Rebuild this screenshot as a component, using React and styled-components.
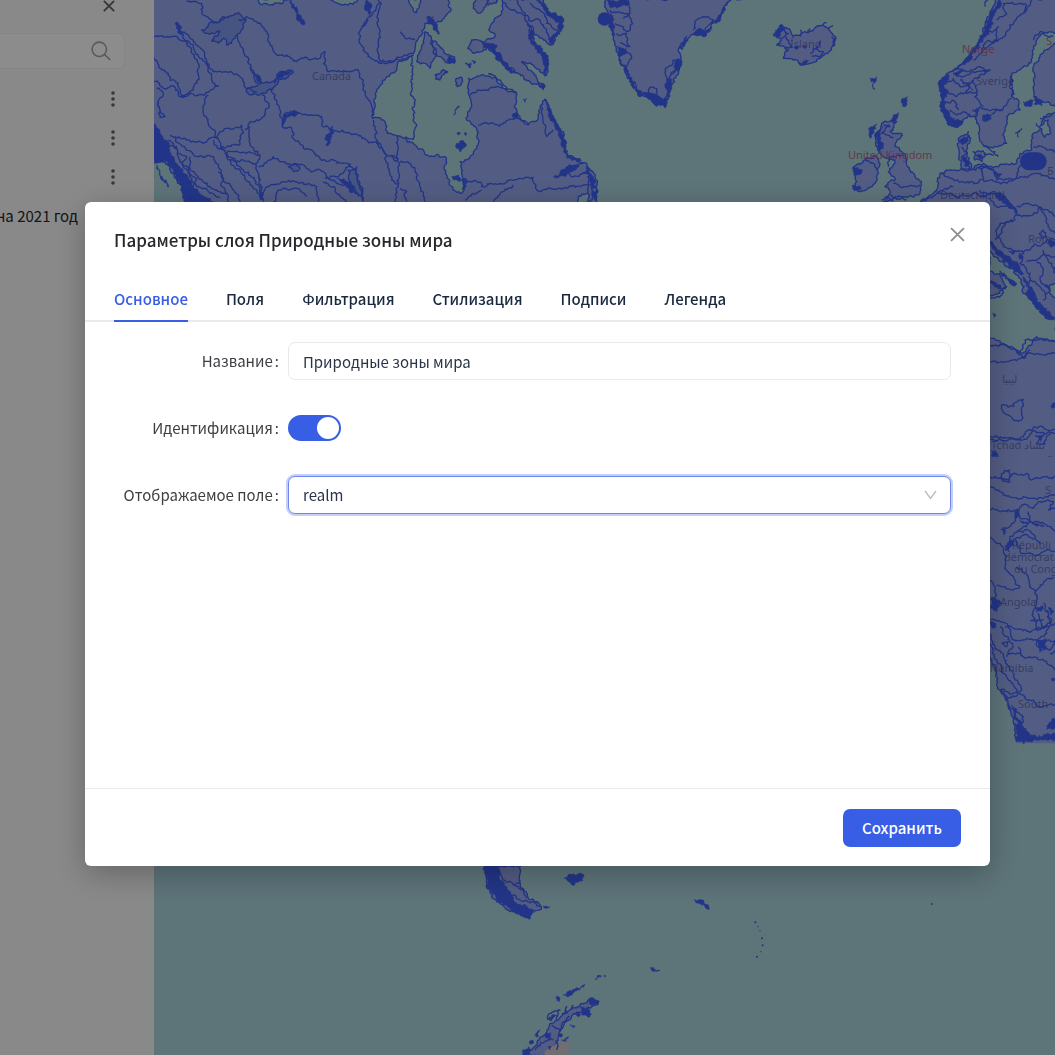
import React from 'react';
import styled, { createGlobalStyle } from 'styled-components';

const GlobalStyle = createGlobalStyle`
  *, *::before, *::after { box-sizing: border-box; }
  body {
    margin: 0;
    font-family: "Noto Sans CJK SC", "Noto Sans", sans-serif;
    font-size: 15px;
    line-height: 24px;
    color: #26282c;
  }
  button, input, select { font: inherit; color: inherit; }
`;

const Shell = styled.div`
  display: grid;
  grid-template-columns: 154px minmax(0, 1fr);
  height: 100vh;
  overflow: hidden;
`;

const Sidebar = styled.aside`
  display: flex;
  flex-direction: column;
  align-items: flex-end;
  padding-right: 29px;
  overflow: hidden;
  background: #f9f9f9;
`;

const IconButton = styled.button`
  display: grid;
  place-items: center;
  width: ${(p) => p.$size}px;
  height: ${(p) => p.$size}px;
  flex: none;
  padding: 0;
  border: 0;
  background: none;
  color: ${(p) => p.$color || '#666'};
`;

const PanelTop = styled.div`
  display: flex;
  align-items: flex-start;
  height: 33px;
  padding-right: 10px;
  flex: none;
`;

const SearchBox = styled.label`
  display: flex;
  align-items: center;
  width: 240px;
  height: 36px;
  flex: none;
  padding-right: 13px;
  border: 1px solid #f0f0f0;
  border-radius: 6px;
  background: #ffffff;
  color: #a2a2a2;
`;

const SearchInput = styled.input`
  flex: 1;
  min-width: 0;
  border: 0;
  outline: 0;
  background: none;
`;

const LayerList = styled.ul`
  display: flex;
  flex-direction: column;
  margin: 0;
  padding: 10px 0 0;
  list-style: none;
`;

const LayerRow = styled.li`
  display: flex;
  align-items: center;
  justify-content: flex-end;
  gap: 23px;
  height: 39px;
  white-space: nowrap;
`;

const MapArea = styled.main`
  min-width: 0;
  overflow: hidden;
  background: #a9d3dd;
`;

const MapSvg = styled.svg`
  display: block;
  width: 100%;
  height: 100%;
  font-family: "Noto Sans", sans-serif;
  font-size: 11px;
`;

const Backdrop = styled.div`
  position: fixed;
  inset: 0;
  display: flex;
  align-items: flex-start;
  padding: 202px 65px 20px 85px;
  background: rgba(0, 0, 0, 0.45);
`;

const Dialog = styled.section`
  flex: 1;
  min-width: 0;
  border-radius: 6px;
  background: #ffffff;
  box-shadow: 0 8px 32px rgba(0, 0, 0, 0.26);
`;

const DialogHeader = styled.header`
  display: flex;
  align-items: flex-start;
  justify-content: space-between;
  padding: 20px 21px 0 29px;
`;

const Title = styled.h1`
  margin: 0;
  padding-top: 4px;
  font-size: 17px;
  line-height: 28px;
  font-weight: 500;
`;

const TabBar = styled.nav`
  display: flex;
  gap: 38px;
  margin-top: 26px;
  padding: 0 29px;
  box-shadow: inset 0 -2px #e9eaec;
`;

const Tab = styled.button`
  height: 42px;
  padding: 0 0 2px;
  border: 0;
  border-bottom: 2px solid ${(p) => (p.$active ? '#375ee4' : 'transparent')};
  background: none;
  color: ${(p) => (p.$active ? '#375ee4' : '#1b2940')};
  font-weight: 500;
`;

const Form = styled.form`
  display: flex;
  flex-direction: column;
  gap: 29px;
  min-height: 466px;
  padding: 20px 39px 20px 29px;
`;

const Field = styled.div`
  display: grid;
  grid-template-columns: 165px minmax(0, 1fr);
  align-items: center;
  column-gap: 9px;
  min-height: 38px;
`;

const FieldLabel = styled.label`
  text-align: right;
  white-space: nowrap;
  color: #3c3e42;
  &::after {
    content: ':';
    margin-left: 2px;
  }
`;

const TextInput = styled.input`
  width: 100%;
  height: 38px;
  padding: 0 14px;
  border: 1px solid #e6e9ee;
  border-radius: 7px;
  outline: 0;
  background: #ffffff;
  color: #2b3446;
`;

const SelectWrap = styled.div`
  display: grid;
  align-items: center;
  & > * { grid-area: 1 / 1; }
`;

const SelectBox = styled.select`
  appearance: none;
  width: 100%;
  height: 38px;
  padding: 0 14px;
  border: 1px solid #6f88ee;
  border-radius: 7px;
  outline: 0;
  background: #ffffff;
  box-shadow: 0 0 0 2px rgba(75, 108, 235, 0.32);
  color: #2b3446;
`;

const SelectArrow = styled.svg`
  justify-self: end;
  margin-right: 14px;
  pointer-events: none;
`;

const Switch = styled.input`
  appearance: none;
  display: flex;
  align-items: center;
  width: 53px;
  height: 26px;
  margin: 0;
  padding: 0 2px;
  border-radius: 13px;
  background: ${(p) => (p.checked ? '#375ee4' : '#b9bcc4')};
  &::before {
    content: '';
    width: 22px;
    height: 22px;
    margin-left: ${(p) => (p.checked ? 'auto' : '0')};
    border-radius: 50%;
    background: #ffffff;
  }
`;

const DialogFooter = styled.footer`
  display: flex;
  justify-content: flex-end;
  padding: 20px 29px 19px;
  border-top: 1px solid #e9eaec;
`;

const PrimaryButton = styled.button`
  width: 118px;
  height: 38px;
  padding: 0;
  border: 0;
  border-radius: 7px;
  background: #375ee4;
  color: #ffffff;
  font-weight: 500;
`;

function CrossIcon({ size, weight }) {
  return (
    <svg width={size} height={size} viewBox="0 0 14 14" fill="none" stroke="currentColor" strokeWidth={weight} aria-hidden="true">
      <path d="M1 1l12 12M13 1L1 13" />
    </svg>
  );
}

function SearchIcon() {
  return (
    <svg width="20" height="20" viewBox="0 0 20 20" fill="none" stroke="currentColor" strokeWidth="1.6" aria-hidden="true">
      <circle cx="8.3" cy="8.3" r="7.2" />
      <path d="M13.5 13.5l5.7 5.3" />
    </svg>
  );
}

function DotsIcon() {
  return (
    <svg width="4" height="16" viewBox="0 0 4 16" fill="currentColor" aria-hidden="true">
      <circle cx="2" cy="2" r="1.8" />
      <circle cx="2" cy="8" r="1.8" />
      <circle cx="2" cy="14" r="1.8" />
    </svg>
  );
}

/* Coastlines: every segment is subdivided and pushed sideways for a natural edge. */
let seed = 7;
function random() {
  seed = (seed * 16807) % 2147483647;
  return seed / 2147483647;
}

function coast(text, closed, rough = 0.3) {
  const nums = text.trim().split(/[\s,]+/).map(Number);
  const pts = [];
  for (let i = 0; i < nums.length; i += 2) pts.push([nums[i], nums[i + 1]]);
  if (closed) pts.push(pts[0]);
  const out = [pts[0]];
  const split = (a, b) => {
    const dx = b[0] - a[0];
    const dy = b[1] - a[1];
    const len = Math.hypot(dx, dy);
    if (len < 7) {
      out.push(b);
      return;
    }
    const k = (random() - 0.5) * 2 * Math.min(rough, 5 / len);
    const m = [(a[0] + b[0]) / 2 - dy * k, (a[1] + b[1]) / 2 + dx * k];
    split(a, m);
    split(m, b);
  };
  for (let i = 1; i < pts.length; i += 1) split(pts[i - 1], pts[i]);
  return 'M' + out.map((p) => p[0].toFixed(1) + ' ' + p[1].toFixed(1)).join('L') + (closed ? 'Z' : '');
}

const LAND = '#97a9ee';
const EDGE = '#3f60f6';
const SEA = '#a9d3dd';

const tiles = [
  {
    x: 150, y: 0,
    base: 'M0 0H780V615H0Z',
    sea: [
      '790,165 745,185 740,210 705,240 685,265 672,305 668,355 700,360 712,400 745,410 790,418',
      '5,485 45,485 70,520 100,560 105,620 5,620',
      '315,-5 330,12 370,15 400,5 420,-5',
      '525,-5 570,12 600,10 630,-5',
    ],
    lakes: [
      '155,90 175,75 225,52 265,37 285,55 275,90 260,105 245,130 230,135 222,115 205,130 185,124 210,95 160,94',
      '290,275 330,250 350,245 380,235 390,215 430,215 400,235 375,260 345,280 300,285',
      '595,510 620,500 632,560 640,600 620,580 600,545',
      '415,500 435,490 450,505 430,515',
    ],
    dark: [
      '5,365 30,400 60,450 75,480 100,510 125,550 150,580 190,605 110,615 95,560 70,520 45,482 5,480',
      '20,495 30,520 55,562 35,540',
      '300,200 318,225 335,250 320,240',
      '390,215 425,213 400,232 372,250',
      '420,0 440,20 452,45 460,75 440,50 430,25',
      '550,380 545,405 530,438 528,405',
      '648,0 665,20 660,50 645,30',
      '395,372 400,350 430,330 445,340 410,352',
      '560,535 600,545 625,590 590,560',
      '75,70 92,78 95,105 85,100',
    ],
    lines: [
      '110,5 155,10 160,45 195,65 235,50',
      '12,110 60,112 105,122 125,150 145,190 145,225 130,270 95,290 85,250 60,240 55,220 30,205 12,170',
      '82,85 100,115 130,135 150,175 175,205 185,240 205,258 165,285 120,280 90,290 75,262 40,265 12,245',
      '92,95 130,120 152,145 172,190 190,215 240,215 275,235 290,265 320,275',
      '20,265 40,280 25,320 45,350 30,352 22,310',
      '175,285 160,330 175,370 195,410 230,470 275,520 320,570 335,600',
      '190,420 240,480 280,510 325,555 340,605',
      '60,405 110,420 160,430 190,412 230,385 275,375 280,400 270,430 215,440',
      '75,410 100,440 140,470 190,470 205,500 215,560 230,585',
      '120,470 120,510 160,545 200,570 235,585 230,610',
      '205,515 240,555 270,605',
      '45,430 80,440 90,480 120,520 140,560 180,580 210,590',
      '30,420 70,430 85,460 110,470 100,500 140,540 130,570 170,600',
      '285,390 300,365 340,350 358,320 345,290 335,285',
      '300,380 300,430 330,465 290,460 245,455 225,460 260,485 315,490',
      '330,465 320,510 335,570 340,600',
      '265,60 290,50 320,65 350,95 360,135 375,160 410,165 440,185 460,175 510,175 525,155 520,190 535,215 575,215 625,210 640,240 640,270 665,320 670,355',
      '262,105 270,130 290,170 305,210 325,250',
      '360,265 380,300 390,350 395,380',
      '395,375 400,345 430,335 480,345 515,350 520,380 550,390 600,400 650,420 685,430 705,460 740,475 785,480',
      '395,380 425,385 430,415 460,445 520,480 590,490 620,510 630,550 640,605',
      '325,500 370,470 400,485 450,495 480,512 520,515 545,540 575,555 610,560',
      '335,600 350,560 380,552 440,545 500,560 505,605',
      '370,605 385,570 430,565 470,590',
      '640,80 660,50 690,10',
      '655,60 625,100 640,150 690,190 730,185 785,165',
      '670,360 680,400 680,430 710,465 725,540 765,560 785,570',
      '725,470 760,490 785,500',
      '520,545 550,560 590,605',
      '525,535 560,530 580,520 600,490',
      '750,95 775,115 785,112',
    ],
  },
  {
    x: 400, y: 0,
    land: [
      '-60,-10 145,-5 150,35 120,65 100,70 75,70 55,115 40,160 0,172 -60,185',
      '75,95 95,120 110,165 90,205 75,190 50,185 65,140',
      '95,120 120,140 165,180 150,190 120,170 100,160',
      '105,225 130,208 143,215 120,240 108,238',
      '170,235 185,232 183,255 172,260',
      '225,-5 220,25 240,40 258,20 260,-5',
      '262,-5 265,15 288,10 290,-5',
      '300,-5 305,40 275,70 270,95 285,110 255,125 215,120 203,145 225,160 265,140 290,160 330,205 380,240 430,265 410,235 365,185 400,195 440,225 445,180 410,140 385,75 400,85 430,120 455,135 470,100 490,65 450,40 425,-5',
      '205,235 240,228 290,235 310,265 350,280 350,340 385,375 415,350 435,300 460,355 490,410 500,460 560,490 580,525 590,570 590,625 -8,625 -8,408 40,430 80,465 135,470 135,510 160,570 180,580 200,545 190,540 180,485 215,465 235,430 230,385 200,360 215,315 205,280',
    ],
    sea: ['30,-5 35,20 50,38 65,-5', '525,610 545,585 575,575 572,610'],
    dark: [
      '170,430 190,422 197,440 183,455 170,445',
      '172,398 180,398 176,404', '192,400 200,400 196,407',
      '80,55 100,50 120,100 100,90',
      '195,190 212,188 208,204', '215,182 228,185 222,192',
      '370,298 380,295 376,308',
      '245,125 290,135 285,150 320,190 345,220 315,200 280,160 250,145',
      '385,70 400,95 400,125 440,165 445,195 435,230 428,180 405,140 385,105',
      '410,0 430,10 450,35 490,55 485,90 458,135 445,118 472,95 478,70 450,48',
      '340,340 355,340 355,355 340,355',
      '460,530 480,520 500,500 555,487 530,505 500,525',
      '432,298 460,350 490,405 500,458 545,482 530,485 490,455 478,410 450,360',
      '560,500 580,525 590,560 590,600 580,570 574,540 555,515',
      '145,170 165,175 160,190 140,182',
      '415,250 435,255 430,270',
      '155,530 175,525 178,545 160,540',
      '160,345 170,325 178,318 168,330',
      '185,540 200,548 188,570',
    ],
    lines: [
      '210,285 250,270 310,265 350,280',
      '235,375 270,370 300,378 350,350 385,375',
      '185,540 240,545 245,560 300,550 360,535 400,532 410,570 480,565 540,560 570,545',
      '280,605 310,575 340,555',
      '0,485 30,490 50,520 60,560 75,605',
      '0,565 20,575 20,605',
      '195,600 220,580 245,570',
      '425,320 430,370 440,410 460,390',
      '265,220 280,225 300,240 320,270',
      '310,5 340,30 370,45 385,75',
      '350,0 360,20 385,60 420,60 440,90 455,130',
      '390,10 420,30 440,70 470,90',
      '0,95 25,115 45,120',
      '500,500 520,530 560,520',
    ],
  },
  {
    x: 590, y: 0,
    land: [
      '50,-5 55,60 75,130 90,185 120,240 150,290 190,295 225,322 240,260 270,190 265,150 300,110 345,90 380,60 410,15 425,-5',
      '575,75 600,90 610,110 650,98 700,75 715,85 735,120 725,150 690,175 640,195 610,180 580,175 595,150 560,135 575,120 550,105',
      '-5,505 15,530 20,570 5,600 -5,605',
    ],
    dark: [
      '50,0 110,0 115,15 60,22', '60,40 72,60 70,110 55,80', '80,140 108,145 110,160 85,168', '150,283 190,280 215,295 235,295 228,322 205,315 180,297',
      '88,175 100,200 125,240 155,285 145,285 115,235', '235,235 248,240 240,290 228,300',
      '262,180 275,180 268,205 240,225 252,200', '310,100 330,85 345,95 365,80 350,105 320,108',
      '268,145 292,108 285,135 275,150', '370,70 395,40 415,5 400,40 380,70',
      '555,100 570,75 590,82 580,92 565,110',
      '625,190 655,182 640,195', '725,110 737,122 730,140', '615,138 628,140 618,148', '640,137 650,138 645,147', '0,520 14,540 8,590',
    ],
    lines: [
      '60,30 110,40 128,70 110,95 75,70', '115,0 120,40 100,55', '80,100 110,100 120,140 90,130', '95,145 125,170 110,210 120,225', '175,290 178,265 200,265 205,300', '225,210 250,180 268,178 255,215 230,240 225,210',
      '310,90 320,60 345,50 370,60 350,90', '660,160 670,145 700,155 690,172 665,168', '630,90 632,110', '655,100 660,85', '680,150 690,125',
      '590,110 605,140 585,145', '570,80 595,100 575,115', '420,0 455,0', '700,75 710,68', '715,90 728,75',
    ],
    circles: [[43, 57, 20]],
  },
  {
    x: 840, y: 0,
    land: [
      '470,-5 440,60 425,110 385,170 330,215 300,250 305,330 325,375 350,382 390,350 410,350 415,400 430,435 470,440 500,430 500,350 540,330 535,300 515,290 515,220 575,185 580,140 610,100 655,100 655,-5',
      '655,125 600,170 580,200 585,300 655,318',
      '655,330 610,350 600,390 580,400 575,450 540,460 530,490 470,500 430,490 400,505 300,520 290,570 245,600 250,625 655,625',
      '355,420 385,395 390,420 380,470 395,500 370,510 358,480',
      '400,455 435,460 425,485 405,480',
      '125,370 170,365 150,395 185,400 165,440 190,460 210,510 245,545 240,580 190,590 130,605 150,580 135,560 165,540 145,515 165,480 125,465 110,440 105,410',
      '75,480 110,470 118,500 105,550 60,575 38,565 50,545 42,500',
    ],
    sea: ['600,385 625,360 632,400 615,412'],
    dark: [
      '90,235 110,230 103,250 92,245', '98,250 105,268 100,265', '188,295 203,290 195,320 188,312', '160,345 175,338 170,365 155,365',
      '525,400 545,385 535,412', '92,380 110,372 100,400 90,415', '105,405 128,380 120,410 130,445 112,452', '550,305 580,300 575,318 552,315',
      '580,290 610,305 605,318 582,312',
      '475,0 485,10 455,65 430,120 405,160 375,195 335,215 380,178 420,115 440,65',
      '300,240 325,222 312,260 322,280 310,300 318,330 345,355 335,380 315,355 300,315',
      '340,220 370,205 355,225', '375,250 400,270 390,255', '345,360 370,362 355,382 340,378',
      '430,345 455,345 445,362 428,362', '398,328 412,325 408,342',
      '358,420 388,405 375,430 362,428', '372,470 390,490 388,505 374,498',
      '42,500 62,508 65,520 45,525', '38,555 58,557 60,570 42,572', '408,465 425,465 418,478', '465,515 485,522 472,532',
      '440,597 480,587 520,605 450,612', '435,10 445,0 435,20',
    ],
    lines: [
      '300,255 340,235 370,260 400,240 405,290 430,320', '310,270 350,290 380,275', '340,220 370,230 410,215 450,210 400,235', '315,310 340,300 355,330', '430,100 460,95 475,80 470,120 440,125 425,150', '470,60 500,40 490,10 560,15 550,40 510,75 490,110 460,130 430,150 400,180',
      '330,330 350,345 370,335 390,350', '350,200 380,215 420,200 440,210', '360,240 385,255 380,280 410,275',
      '550,35 575,0', '490,325 500,310 515,295', '515,225 515,290', '455,340 490,330', '130,375 150,380 125,400 160,415', '190,465 150,470 145,500', '160,550 195,560 240,555', '150,585 185,590 200,600', '125,600 140,590 160,605',
      '300,520 350,540 410,550 430,540 420,500 460,510 470,540 530,530 540,495', '395,510 440,500 465,520', '245,605 290,580 340,560', '430,545 500,550 540,530 600,520 655,540',
      '290,575 350,590 400,580 470,585 520,610', '435,610 470,590', '430,440 465,455 460,465 432,460', '580,440 640,450 655,470', '600,355 640,340', '590,370 600,380', '75,475 100,490 110,510', '465,465 475,470',
      '580,120 600,95 640,110', '405,350 420,320 455,330 490,325', '365,440 380,455 365,470 380,490',
    ],
    rounds: [[540, 457, 80, 54]],
  },
  {
    x: 980, y: 190,
    base: 'M20 0H235V860H20Z',
    sea: [
      '25,180 60,215 100,235 125,270 130,310 165,345 200,385 232,388 232,455 170,440 130,490 110,485 70,460 25,440',
      '195,290 232,275 232,330 210,310',
    ],
    land: ['25,245 60,250 80,290 60,310 25,312'],
    dark: [
      '30,155 60,182 105,215 130,250 118,250 80,215 45,190', '130,260 150,292 180,340 225,390 195,383 165,343 145,320', '60,5 88,38 108,62 80,42 45,20',
      '32,272 45,277 65,297 50,290', '118,190 130,200 128,212 117,205', '35,780 55,800 45,820 30,815', '205,800 215,803 211,812', '218,640 230,640 230,655 218,655',
      '60,242 80,258 110,280 105,288 75,260', '165,738 195,730 183,755 178,748', '205,152 230,152 230,170 208,168', '38,370 46,372 42,382', '85,185 108,182 103,190',
    ],
    lines: [
      '0,20 40,5 70,30 95,45 110,75 170,70 180,50 225,80', '30,25 50,50 80,45 110,70 105,90 60,100 50,130 70,170 110,185 150,180 170,165 225,150',
      '110,50 140,40 180,55 200,100 225,130', '105,90 70,110 45,150', '130,185 120,220 150,250 145,290 170,320', '170,215 190,240 180,270 210,300 190,330', '190,180 215,220 225,250',
      '140,215 170,210 190,190 225,200', '150,270 180,290 195,310', '190,120 178,130 185,145 200,140 190,120', '150,290 165,330 190,350',
      '30,325 65,315 80,290', '30,515 110,512 150,488 225,490', '120,485 135,450 180,445 225,455', '110,480 130,505 150,480', '30,465 80,465 120,490',
      '65,645 100,650 118,630 130,628 125,665 125,690 105,692 75,670 65,645', '30,740 130,740 160,712 225,718', '30,748 140,748 165,722 225,730', '180,735 170,760 195,762 210,730',
      '70,830 90,805 120,825', '45,780 60,820 80,835', '0,0 60,15 80,25',
    ],
  },
  {
    x: 980, y: 460,
    base: 'M20 -10H235V850H108L100 780L80 730L58 690L45 640L30 610H20Z',
    dark: [
      '105,790 130,800 150,830 225,820 228,840 180,838 130,852 108,838', '32,415 58,420 65,432 50,455 32,445', '75,258 95,240 88,275 75,270', '120,180 160,188 195,200 165,193 130,192',
      '165,442 190,438 185,452 168,455', '215,780 230,775 230,800 200,808', '205,442 220,452 213,465', '175,543 195,535 200,562 182,568', '95,735 110,755 125,790 115,790', '105,158 118,152 106,175',
      '32,485 48,492 44,505 34,502', '62,208 78,203 72,225', '215,655 230,655 228,665',
    ],
    lines: [
      '30,50 60,55 85,60 95,45 140,40 155,60 225,50', '30,80 55,90 70,105 140,112 225,105', '65,40 70,65 90,65 88,30 65,40', '30,150 60,155 115,150 125,135 160,145 180,125 220,125 205,150 225,145',
      '115,150 120,175 145,180 145,155', '75,205 95,190 120,165', '85,270 90,230 130,200 150,180 200,195 225,220', '105,240 120,275 160,285 200,270 225,275', '110,215 145,210 180,250', '85,250 130,225 160,240', '30,230 60,250 80,290 80,330 100,350 120,380 100,390 50,375',
      '110,320 135,340 165,400 190,370 220,350', '165,400 170,430 160,470 170,510 210,490 200,450', '190,430 215,480 200,520 170,540 180,575 210,570 225,540', '30,350 45,390 40,430', '30,480 80,490 100,505 160,510 225,490', '75,500 100,540 130,540 225,545', '60,500 100,560 80,590 110,580 150,590 200,605 225,630',
      '65,550 85,545 80,560 65,550', '30,520 45,560 70,590 100,640 125,690 100,700 60,690', '30,550 50,600 80,650 110,700', '60,690 80,720 120,700 150,720 180,740 225,735', '80,735 100,745 130,770 125,820', '30,570 45,630 60,690 85,740 100,780 108,840', '210,580 225,570',
      '150,480 190,480', '175,460 190,500', '115,560 130,590',
    ],
  },
  {
    x: 460, y: 850,
    land: [
      '72,45 80,100 110,155 150,185 210,205 205,185 245,172 205,145 180,100 182,45',
      '185,620 215,600 245,560 275,520 330,480 385,450 415,455 380,475 335,500 300,540 280,600 255,620',
    ],
    ice: ['255,620 265,590 300,580 328,570 328,600 320,620'],
    dark: [
      '70,45 112,45 118,85 145,120 160,150 190,165 222,180 208,208 170,190 120,160 85,115', '312,85 330,72 372,75 368,92 345,104 325,95', '703,148 725,150 745,165 748,178 725,165', '570,352 582,358 600,362 580,364',
      '310,435 335,425 375,403 350,422 325,440', '385,450 402,445 418,455 395,465', '360,470 385,475 390,500 365,495', '265,505 283,493 292,497 275,512', '225,555 240,540 235,560', '188,600 205,590 210,612 185,620', '330,525 345,528 340,533', '305,570 325,560 320,575', '405,388 418,376 425,378 412,384', '250,168 270,170 258,175',
      '208,575 220,572 215,582', '288,445 296,440 298,455', '258,548 272,548 268,572 258,565', '432,375 438,378 434,382', '340,490 360,485 355,500', '265,590 275,590 270,600',
    ],
    lines: [
      '110,50 130,90 160,105 182,100', '160,105 190,120 200,145', '150,130 180,150 240,170', '265,510 270,490 300,480 290,510', '275,525 300,545 330,500', '240,575 280,570', '225,600 240,580', '305,490 320,470 322,490', '290,600 288,570', '335,480 340,465',
    ],
    circles: [[302, 556, 6], [886, 217, 3], [894, 230, 2], [900, 242, 2], [906, 265, 3], [908, 286, 3], [903, 305, 2], [891, 320, 3], [1415, 162, 3]],
  },
];

const geometry = tiles.map((t) => ({
  ...t,
  land: (t.land || []).map((d) => coast(d, true)),
  sea: (t.sea || []).map((d) => coast(d, true)),
  lakes: (t.lakes || []).map((d) => coast(d, true)),
  ice: (t.ice || []).map((d) => coast(d, true)),
  dark: (t.dark || []).map((d) => coast(d, true, 0.4)),
  lines: t.lines.map((d) => coast(d, false)),
}));

const places = [
  [312, 80, 'Canada'],
  [848, 159, 'United Kingdom', true],
  [962, 53, 'Norge', true],
  [976, 85, 'Sverige'],
  [1046, 45, 'S', true],
  [940, 199, 'Deutschland'],
  [1047, 175, 'Б'],
  [1028, 243, 'Rom'],
  [1002, 383, 'ليبيا'],
  [991, 449, 'Tchad تشاد'],
  [1045, 494, 'S'],
  [1012, 549, 'Républi'],
  [1004, 561, 'démocrat'],
  [1014, 573, 'du Cong'],
  [1000, 606, 'Angola'],
  [990, 672, 'Namibia'],
  [1018, 708, 'South'],
  [790, 48, 'Ísland'],
];

function WorldMap() {
  return (
    <MapSvg viewBox="154 0 901 1055" preserveAspectRatio="xMinYMin slice" role="img" aria-label="Карта природных зон мира">
      {geometry.map((t) => (
        <g key={t.x + '-' + t.y} transform={`translate(${t.x} ${t.y}) scale(0.33333)`} strokeLinejoin="round" strokeWidth="4" stroke={EDGE}>
          {t.base && <path d={t.base} fill={LAND} stroke="none" />}
          {t.land.length > 0 && t.base === undefined && <path d={t.land.join('')} fill={LAND} />}
          <path d={t.sea.join('')} fill={SEA} />
          {t.base && <path d={t.land.join('')} fill={LAND} />}
          <path d={t.lakes.join('')} fill="#7f9ae9" />
          <path d={t.ice.join('')} fill="#cfc6cc" stroke="none" />
          <path d={t.lines.join('')} fill="none" />
          <path d={t.dark.join('')} fill={EDGE} strokeWidth="2" />
          {(t.circles || []).map((c) => <circle key={c.join()} cx={c[0]} cy={c[1]} r={c[2]} fill={EDGE} stroke="none" />)}
          {(t.rounds || []).map((r) => <rect key={r.join()} x={r[0]} y={r[1]} width={r[2]} height={r[3]} rx="27" fill={EDGE} stroke="none" />)}
        </g>
      ))}
      {places.map(([x, y, name, red]) => (
        <text key={name + y} x={x} y={y} fill={red ? '#b8587c' : '#4a4d96'} fillOpacity={red ? 0.9 : 0.65}>{name}</text>
      ))}
    </MapSvg>
  );
}

const layers = ['', '', '', 'на 2021 год'];
const tabs = ['Основное', 'Поля', 'Фильтрация', 'Стилизация', 'Подписи', 'Легенда'];

export default function App() {
  const [active, setActive] = React.useState(tabs[0]);
  const [name, setName] = React.useState('Природные зоны мира');
  const [identify, setIdentify] = React.useState(true);

  return (
    <>
      <GlobalStyle />
      <Shell>
        <Sidebar>
          <PanelTop>
            <IconButton type="button" $size={12} $color="#666" aria-label="Закрыть панель">
              <CrossIcon size={12} weight={2.2} />
            </IconButton>
          </PanelTop>
          <SearchBox>
            <SearchInput type="text" aria-label="Поиск" />
            <SearchIcon />
          </SearchBox>
          <LayerList>
            {layers.map((label, i) => (
              <LayerRow key={i}>
                {label && <span>{label}</span>}
                <IconButton type="button" $size={24} aria-label="Меню слоя">
                  <DotsIcon />
                </IconButton>
              </LayerRow>
            ))}
          </LayerList>
        </Sidebar>
        <MapArea>
          <WorldMap />
        </MapArea>
      </Shell>

      <Backdrop>
        <Dialog role="dialog" aria-modal="true" aria-labelledby="dialog-title">
          <DialogHeader>
            <Title id="dialog-title">Параметры слоя Природные зоны мира</Title>
            <IconButton type="button" $size={24} $color="#8c8c8c" aria-label="Закрыть">
              <CrossIcon size={15} weight={1.6} />
            </IconButton>
          </DialogHeader>
          <TabBar>
            {tabs.map((tab) => (
              <Tab key={tab} type="button" $active={tab === active} onClick={() => setActive(tab)}>
                {tab}
              </Tab>
            ))}
          </TabBar>
          <Form id="layer-form" onSubmit={(e) => e.preventDefault()}>
            <Field>
              <FieldLabel htmlFor="layer-name">Название</FieldLabel>
              <TextInput id="layer-name" type="text" value={name} onChange={(e) => setName(e.target.value)} />
            </Field>
            <Field>
              <FieldLabel htmlFor="layer-identify">Идентификация</FieldLabel>
              <Switch id="layer-identify" type="checkbox" checked={identify} onChange={(e) => setIdentify(e.target.checked)} />
            </Field>
            <Field>
              <FieldLabel htmlFor="layer-field">Отображаемое поле</FieldLabel>
              <SelectWrap>
                <SelectBox id="layer-field" defaultValue="realm">
                  <option value="realm">realm</option>
                </SelectBox>
                <SelectArrow width="13" height="10" viewBox="0 0 13 10" fill="none" stroke="#b8bac0" strokeWidth="1.3" aria-hidden="true">
                  <path d="M1 1l5.5 7.5L12 1" />
                </SelectArrow>
              </SelectWrap>
            </Field>
          </Form>
          <DialogFooter>
            <PrimaryButton type="submit" form="layer-form">Сохранить</PrimaryButton>
          </DialogFooter>
        </Dialog>
      </Backdrop>
    </>
  );
}
